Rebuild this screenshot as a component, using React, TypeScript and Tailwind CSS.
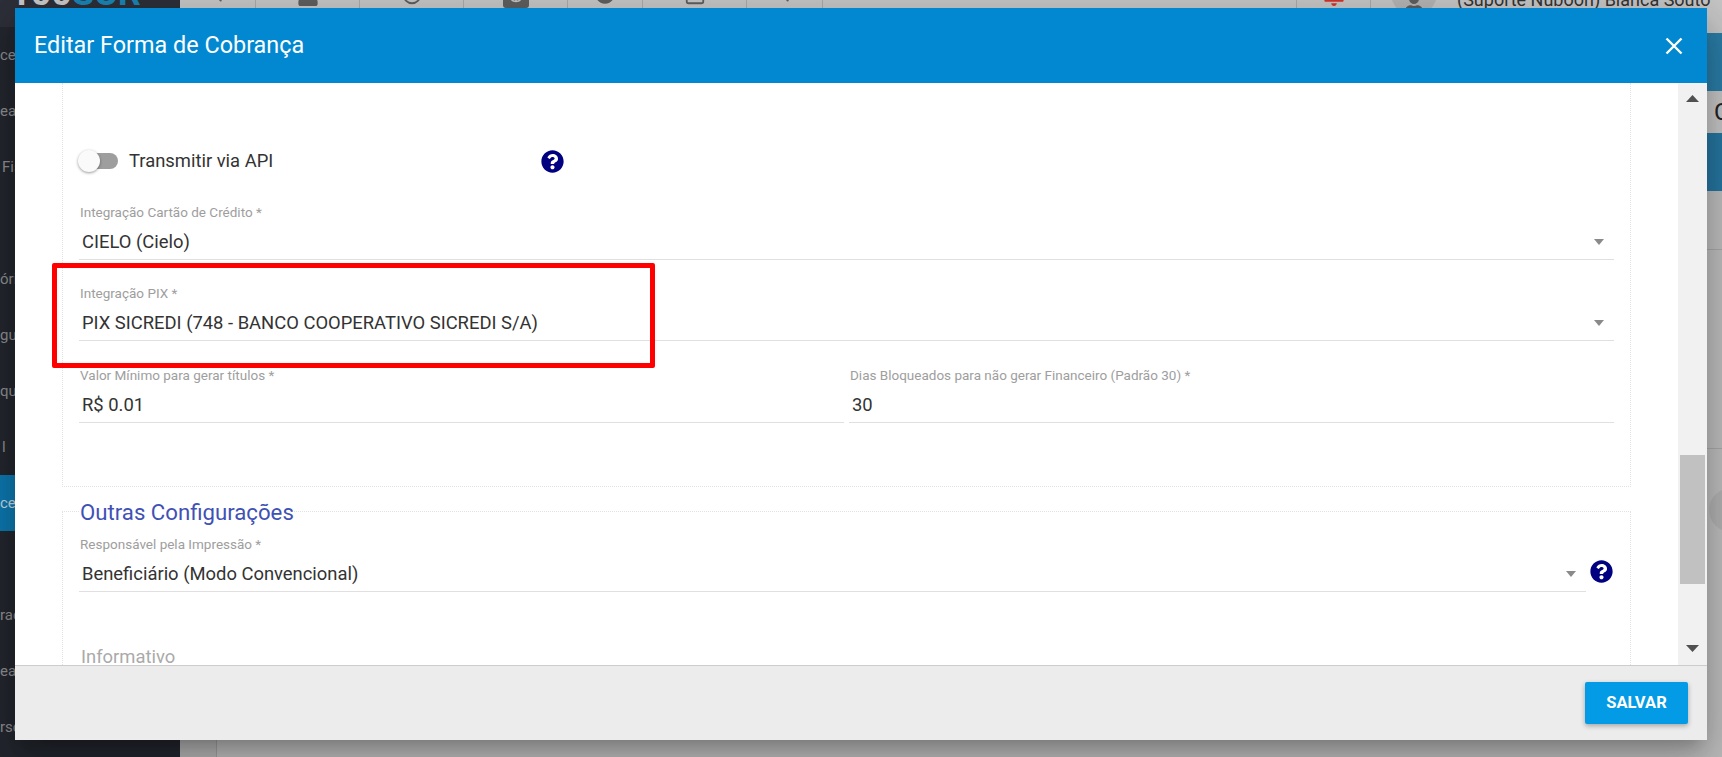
import { ChevronLeft, ChevronRight, History, SquareTerminal } from "lucide-react";
import { FaBell, FaQuestionCircle, FaUser, FaCircle, FaAnchor } from "react-icons/fa";

const sideItems = ["ce", "ear", "Fis", "", "óri", "gu", "que", "l", "ce", "", "raç", "ear", "rso"];

const Caret = () => (
	<svg width="10" height="6" viewBox="0 0 10 6" className="shrink-0">
		<polygon points="0,0 10,0 5,6" fill="#8a8a8a" />
	</svg>
);

interface FieldProps {
	label: string;
	value: string;
	select?: boolean;
	className?: string;
}

function Field({ label, value, select, className }: FieldProps) {
	return (
		<div className={`flex h-[55px] flex-col border-b border-[#e0e0e0] ${className ?? ""}`}>
			<span className="h-[14px] pl-px text-[13.5px] leading-[14px] text-[#9e9e9e]">{label}</span>
			<div className="mt-[10px] flex h-[26px] items-center justify-between pl-[3px] pr-[10px]">
				<span className="text-[18.4px] leading-[26px] text-[#333333]">{value}</span>
				{select && <Caret />}
			</div>
		</div>
	);
}

function Backdrop() {
	return (
		<div className="flex h-full w-full">
			<aside className="flex w-[180px] shrink-0 flex-col bg-[#23262e]">
				<div className="flex h-[27px] gap-0 overflow-hidden bg-[#2d2f39] pl-[10px] text-[36px] font-bold leading-[36px]">
					<span className="-mt-[25px] text-[#c9c9c9]">100</span>
					<span className="-mt-[25px] text-[#1b84b4]">SUR</span>
				</div>
				{sideItems.map((item, i) => (
					<div key={i} className={`flex h-14 items-center ${i === 8 ? "bg-[#0d77ae]" : ""}`}>
						<span className={`flex w-[15px] justify-start overflow-hidden whitespace-nowrap text-[15px] ${i === 8 ? "text-[#c5d8e4]" : "text-[#8e8e8e]"} ${item === "Fis" || item === "l" ? "pl-[2px]" : ""}`}>
							{item}
						</span>
					</div>
				))}
			</aside>
			<main className="flex min-w-0 flex-1 flex-col bg-[#bdbdbd]">
				<header className="flex h-[33px] shrink-0 bg-[#c6c6c6] text-[#5f5f5f]">
					<div className="flex w-[76px] justify-center border-r border-[#aaaaaa]">
						<ChevronLeft size={22} className="-mt-[16px]" />
					</div>
					<div className="flex w-[104px] justify-center border-r border-[#aaaaaa]">
						<FaUser size={22} className="-mt-[16px]" />
					</div>
					<div className="flex w-[104px] justify-center border-r border-[#aaaaaa]">
						<History size={22} className="-mt-[16px]" />
					</div>
					<div className="flex w-[104px] justify-center border-r border-[#aaaaaa]">
						<div className="-mt-[16px] flex h-[24px] w-[26px] items-center justify-center rounded-[3px] bg-[#5f5f5f] text-[#c6c6c6]">
							<FaAnchor size={14} />
						</div>
					</div>
					<div className="flex w-[75px] justify-center border-r border-[#aaaaaa]">
						<FaCircle size={20} className="-mt-[16px]" />
					</div>
					<div className="flex w-[104px] justify-center border-r border-[#aaaaaa]">
						<SquareTerminal size={22} className="-mt-[16px]" />
					</div>
					<div className="flex w-[76px] justify-center border-r border-[#aaaaaa]">
						<ChevronRight size={22} className="-mt-[16px] rotate-180" />
					</div>
					<div className="flex-1 border-r border-[#aaaaaa]" />
					<div className="flex w-[74px] justify-center border-r border-[#aaaaaa] text-[#d5332c]">
						<FaBell size={22} className="-mt-[16px]" />
					</div>
					<div className="flex w-[351px] gap-[20px] overflow-hidden pl-[20px]">
						<div className="-mt-[30px] flex h-[46px] w-[46px] shrink-0 justify-center rounded-full bg-[#b4b4b4] pt-[24px]">
							<FaUser size={20} />
						</div>
						<span className="-mt-[9px] whitespace-nowrap text-[18px] leading-[17px] text-[#333333]">
							(Suporte Nuboon) Bianca Souto
						</span>
					</div>
				</header>
				<div className="h-[58px] shrink-0 bg-[#2a7ca6]" />
				<div className="flex h-[42px] shrink-0 items-center justify-end bg-[#c4c4c4] text-2xl text-[#222222]">
					<span className="w-2 overflow-hidden">C</span>
				</div>
				<div className="h-[58px] shrink-0 bg-[#26759f]" />
				<div className="h-[59px] shrink-0 border-b border-[#a8a8a8]" />
				<div className="h-[199px] shrink-0 border-b border-[#a8a8a8]" />
				<div className="flex flex-1">
					<div className="w-[37px] border-r border-[#a0a0a0] bg-[#b4b4b4]" />
				</div>
			</main>
			<div className="absolute left-[1709px] top-[488px] h-11 w-11 rounded-full bg-[#b2b2b2]" />
		</div>
	);
}

function Scrollbar() {
	return (
		<div className="flex w-[29px] shrink-0 flex-col items-center bg-[#f1f1f1]">
			<svg width="13" height="7" viewBox="0 0 13 7" className="mt-3 shrink-0">
				<polygon points="6.5,0 13,7 0,7" fill="#505050" />
			</svg>
			<div className="mt-[353px] h-[129px] w-[25px] shrink-0 bg-[#c1c1c1]" />
			<svg width="13" height="7" viewBox="0 0 13 7" className="mt-[61px] shrink-0">
				<polygon points="0,0 13,0 6.5,7" fill="#505050" />
			</svg>
		</div>
	);
}

export default function App() {
	return (
		<div className="relative h-[757px] w-[1722px] overflow-hidden font-['Roboto',sans-serif]">
			<Backdrop />

			<div className="absolute left-[15px] top-2 flex h-[732px] w-[1692px] flex-col bg-white shadow-[0_11px_15px_-7px_rgba(0,0,0,0.2),0_24px_38px_3px_rgba(0,0,0,0.14),0_9px_46px_8px_rgba(0,0,0,0.12)]">
				<div className="flex h-[75px] shrink-0 items-center justify-between bg-[#0288d1] pl-[19px] pr-6 text-white">
					<h1 className="text-[23.4px] font-normal">Editar Forma de Cobrança</h1>
					<svg width="18" height="18" viewBox="0 0 18 18" className="shrink-0">
						<path d="M1.5 1.5 L16.5 16.5 M16.5 1.5 L1.5 16.5" stroke="white" strokeWidth="2.4" />
					</svg>
				</div>

				<div className="flex min-h-0 flex-1">
					<div className="min-w-0 flex-1 overflow-hidden pl-[47px]">
						<section className="h-[404px] w-[1569px] overflow-hidden border-x border-b border-dotted border-[#e2e2e2] px-4">
							<div className="mt-[67px] flex h-[22px] items-center">
								<div className="relative h-4 w-[39px] rounded-full bg-[#9e9e9e]">
									<div className="absolute -left-px -top-[3px] h-[22px] w-[22px] rounded-full bg-[#fafafa] shadow-[0_1px_3px_rgba(0,0,0,0.4)]" />
								</div>
								<span className="ml-[11px] w-[412px] text-[18.4px] text-[#333333]">Transmitir via API</span>
								<FaQuestionCircle size={23} className="text-[#000080]" />
							</div>
							<div className="mt-[33px] flex flex-col gap-[26px]">
								<Field label="Integração Cartão de Crédito *" value="CIELO (Cielo)" select />
								<Field label="Integração PIX *" value="PIX SICREDI (748 - BANCO COOPERATIVO SICREDI S/A)" select />
								<div className="mt-px flex gap-[5px]">
									<Field label="Valor Mínimo para gerar títulos *" value="R$ 0.01" className="flex-1" />
									<Field label="Dias Bloqueados para não gerar Financeiro (Padrão 30) *" value="30" className="flex-1" />
								</div>
							</div>
						</section>

						<section className="mt-6 h-[300px] w-[1569px] border border-dotted border-[#e2e2e2] px-4">
							<h2 className="-mt-[12px] ml-px h-6 w-fit bg-white text-[22.2px] leading-6 text-[#3f51b5]">Outras Configurações</h2>
							<div className="mt-[13px] flex items-start gap-[4px]">
								<Field label="Responsável pela Impressão *" value="Beneficiário (Modo Convencional)" select className="w-[1507px]" />
								<FaQuestionCircle size={23} className="mt-[23px] text-[#000080]" />
							</div>
							<p className="ml-[2px] mt-[53px] text-[18.4px] leading-6 text-[#aaaaaa]">Informativo</p>
						</section>
					</div>
					<Scrollbar />
				</div>

				<div className="flex h-[75px] shrink-0 items-center justify-end border-t border-[#cccccc] bg-[#ececec] pr-[19px]">
					<button className="h-[42px] w-[103px] rounded-[2px] bg-[#039be5] text-[16.5px] font-bold text-white shadow-[0_2px_5px_rgba(0,0,0,0.3)]">
						SALVAR
					</button>
				</div>
			</div>

			<div className="absolute left-[52px] top-[263px] h-[105px] w-[603px] rounded-[2px] border-[5px] border-[#ff0000]" />
		</div>
	);
}
